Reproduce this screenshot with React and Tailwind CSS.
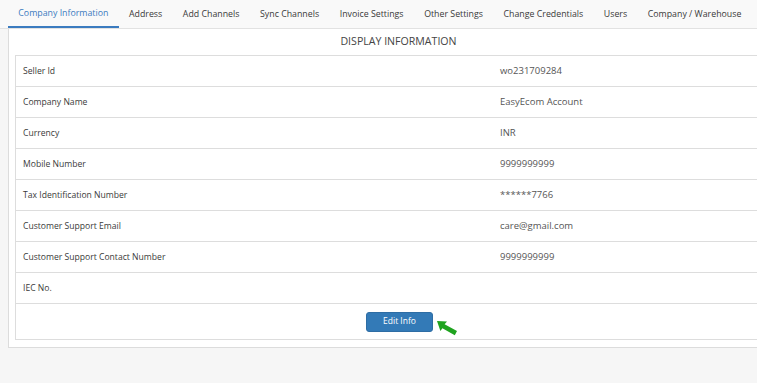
export default function App() {
  const tabs = [
    "Company Information",
    "Address",
    "Add Channels",
    "Sync Channels",
    "Invoice Settings",
    "Other Settings",
    "Change Credentials",
    "Users",
    "Company / Warehouse",
  ];
  const rows = [
    ["Seller Id", "wo231709284"],
    ["Company Name", "EasyEcom Account"],
    ["Currency", "INR"],
    ["Mobile Number", "9999999999"],
    ["Tax Identification Number", "******7766"],
    ["Customer Support Email", "care@gmail.com"],
    ["Customer Support Contact Number", "9999999999"],
    ["IEC No.", ""],
  ];
  return (
    <div
      className="w-[757px] h-[383px] overflow-hidden bg-[#f6f6f6]"
      style={{ fontFamily: '"Open Sans", sans-serif' }}
    >
      <div className="pl-2 flex h-[29px] bg-[#f9f9f9] border-b border-[#e2e2e2] w-[800px]">
        {tabs.map((t, i) => (
          <div
            key={t}
            className={
              "px-[10.3px] pt-[1px] flex items-center text-[8.8px] font-medium whitespace-nowrap " +
              (i === 0
                ? "text-[#3b7bbf] border-b-2 border-[#3b7bbf]"
                : "text-[#3a3a3a]")
            }
          >
            {t}
          </div>
        ))}
      </div>
      <div className="ml-2 w-[800px] bg-white border-l border-b border-[#dcdcdc] pb-[7px]">
        <div className="h-[26px] flex items-center justify-center pr-[20px] text-[10.6px] text-[#444]">
          DISPLAY INFORMATION
        </div>
        <div className="ml-[6px] border-l border-t border-b border-[#dddddd]">
          {rows.map(([k, v]) => (
            <div key={k} className="flex h-[31px] border-b border-[#dddddd] items-center">
              <div className="w-[477px] pl-[7px] text-[8.6px] font-medium text-[#3a3a3a]">{k}</div>
              <div className="pl-[7px] text-[9.5px] text-[#555]">{v}</div>
            </div>
          ))}
          <div className="h-[35px] flex items-center pl-[350px]">
            <button className="w-[67px] h-[20px] rounded-[3px] bg-[#337ab7] border border-[#2e6da4] text-white text-[8.5px]">
              Edit Info
            </button>
            <svg width="24" height="17" viewBox="0 0 24 17" className="ml-[3px] mt-[14px]">
              <path d="M1 1 L11 1.5 L8.6 4.2 L21 11 L18.8 15.2 L6.4 8.2 L4.4 11 Z" fill="#1fa31f" />
            </svg>
          </div>
        </div>
      </div>
    </div>
  );
}
